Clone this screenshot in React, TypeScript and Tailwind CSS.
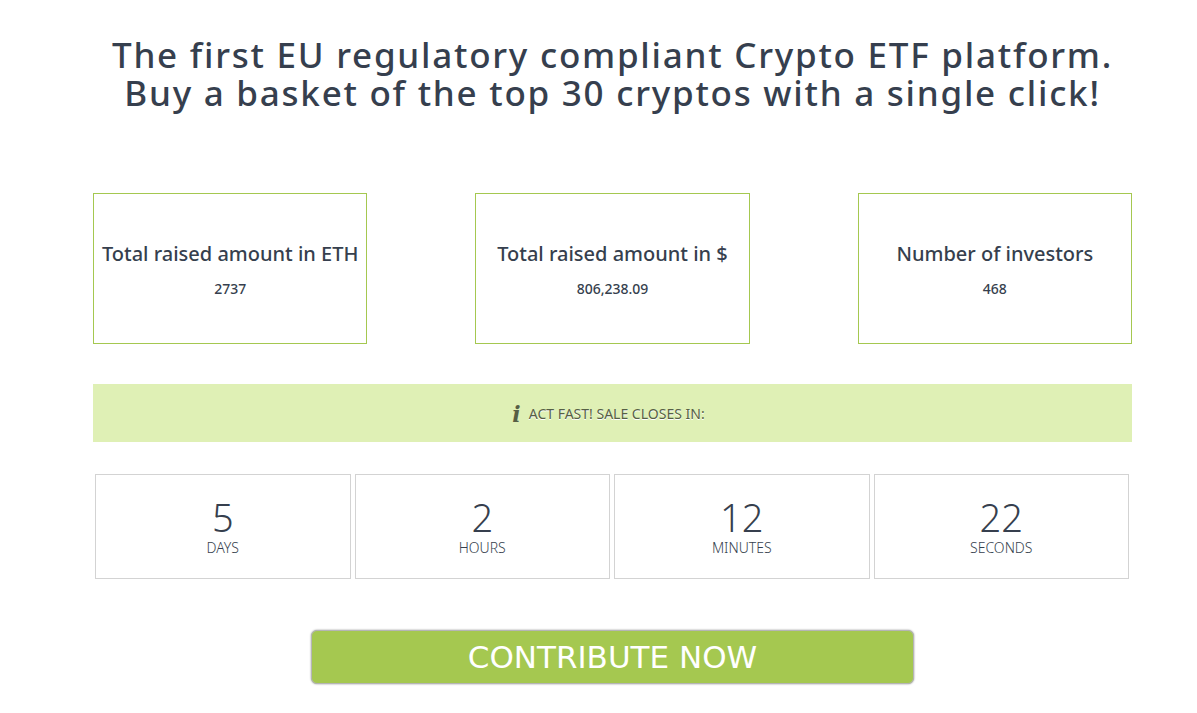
const stats = [
  { label: "Total raised amount in ETH", value: "2737" },
  { label: "Total raised amount in $", value: "806,238.09" },
  { label: "Number of investors", value: "468" },
];

const countdown = [
  { unit: "DAYS", value: 5 },
  { unit: "HOURS", value: 2 },
  { unit: "MINUTES", value: 12 },
  { unit: "SECONDS", value: 22 },
];

function StatCard({ label, value }: { label: string; value: string }) {
  return (
    <div className="border border-[#a5c850] pt-12 pb-11 text-center">
      <h2 className="text-[20px] leading-6 font-medium whitespace-nowrap">{label}</h2>
      <p className="mt-[13px] text-[14px] leading-5 font-medium">{value}</p>
    </div>
  );
}

export default function App() {
  return (
    <main className="bg-white pt-9 pr-[65px] pb-7 pl-[93px] font-['Noto_Sans','Open_Sans',sans-serif] text-[#363f4e]">
      <h1 className="text-center text-[35px] leading-[38px] font-medium tracking-wider">
        The first EU regulatory compliant Crypto ETF platform.
        <br />
        Buy a basket of the top 30 cryptos with a single click!
      </h1>

      <section className="mt-[81px] grid grid-cols-3 gap-[108px]">
        {stats.map((s) => (
          <StatCard key={s.label} label={s.label} value={s.value} />
        ))}
      </section>

      <div className="mt-10 flex h-[58px] items-center justify-center gap-2 bg-[#dff0b5] pt-0.5 pr-2 text-[#565f45]">
        <span
          aria-hidden="true"
          className="font-['DejaVu_Serif',serif] text-[22px] leading-6 font-bold italic"
        >
          i
        </span>
        <p className="text-[14px] leading-5 text-shadow-[0_1px_0_#ffffff]">
          ACT FAST! SALE CLOSES IN:
        </p>
      </div>

      <section className="mt-8 grid grid-cols-4 gap-1 pr-[3px] pl-0.5">
        {countdown.map((c) => (
          <div key={c.unit} className="border border-[#d3d3d3] pt-[22px] pb-5 text-center">
            <p className="text-[38px] leading-10 font-light">{c.value}</p>
            <p className="text-[14px] leading-[21px] font-light">{c.unit}</p>
          </div>
        ))}
      </section>

      <div className="mt-[51px] flex justify-center">
        <button
          type="button"
          className="w-[58%] rounded-md border border-[#b5b5b5] bg-[#a5c850] py-[7px] font-['DejaVu_Sans',sans-serif] text-[31px] leading-[38px] text-white shadow-[0_0_2px_#888888]"
        >
          CONTRIBUTE NOW
        </button>
      </div>
    </main>
  );
}
